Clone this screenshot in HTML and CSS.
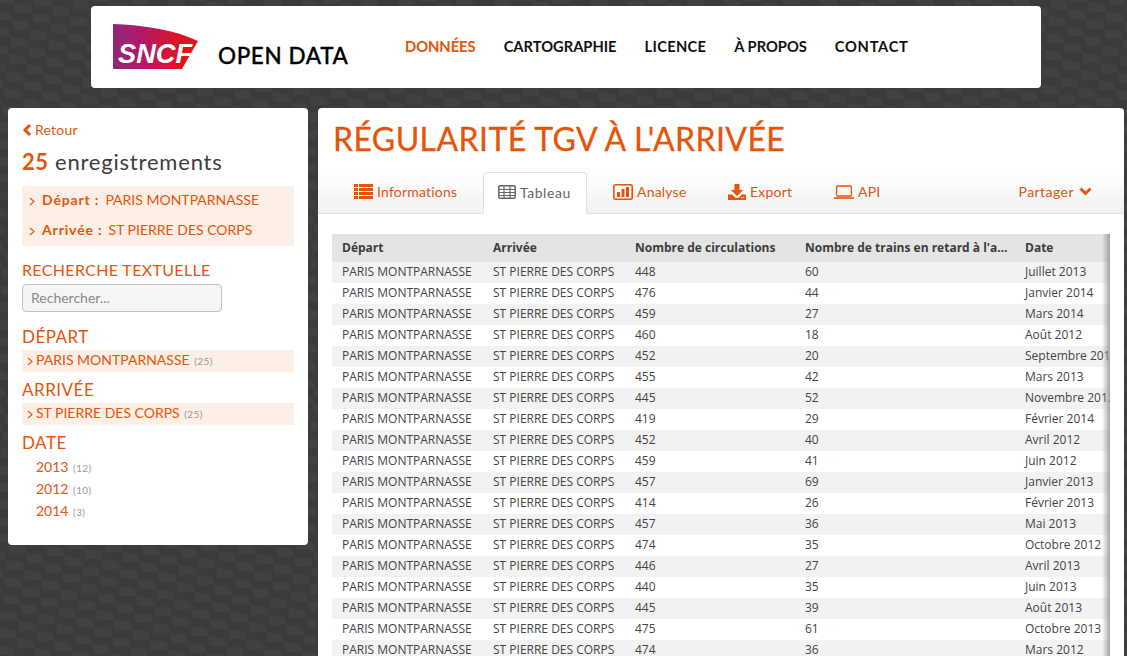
FILE: index.html
```html
<!DOCTYPE html>
<html lang="fr">
<head>
<meta charset="utf-8">
<title>Régularité TGV à l'arrivée</title>
<link rel="stylesheet" href="styles.css">
</head>
<body>
<header class="topbar">
  <svg class="logo" width="85" height="45" viewBox="0 0 85 45">
    <defs><linearGradient id="lg"><stop offset="0" stop-color="#8c2a78"/><stop offset=".3" stop-color="#b01870"/><stop offset=".8" stop-color="#e0141e"/><stop offset="1" stop-color="#e3121a"/></linearGradient></defs>
    <path d="M0 0C30 1 62 6 85 17L69 45H1Q0 45 0 44Z" fill="url(#lg)"/>
    <text x="5" y="39" class="logo-text" textLength="74" lengthAdjust="spacingAndGlyphs">SNCF</text>
  </svg>
  <div class="brand">OPEN DATA</div>
  <nav class="nav">
    <a class="active">DONNÉES</a><a>CARTOGRAPHIE</a><a>LICENCE</a><a>À PROPOS</a><a>CONTACT</a>
  </nav>
</header>
<div class="columns">
  <aside class="side">
    <a class="back"><svg width="10" height="12" viewBox="0 0 10 12"><path d="M8 1 3 6l5 5" fill="none" stroke="#e6540a" stroke-width="3"/></svg>Retour</a>
    <div class="count"><b>25</b> enregistrements</div>
    <div class="refine">
      <div class="ref"><svg class="gt" width="6" height="9" viewBox="0 0 6 9"><path d="M1 1l4 3.5L1 8" fill="none" stroke="#e6540a" stroke-width="1.1"/></svg><b>Départ :</b> PARIS MONTPARNASSE</div>
      <div class="ref"><svg class="gt" width="6" height="9" viewBox="0 0 6 9"><path d="M1 1l4 3.5L1 8" fill="none" stroke="#e6540a" stroke-width="1.1"/></svg><b>Arrivée :</b> ST PIERRE DES CORPS</div>
    </div>
    <h3 class="search-title">RECHERCHE TEXTUELLE</h3>
    <input class="search" placeholder="Rechercher...">
    <h3 class="facet-title">DÉPART</h3>
    <div class="facet on"><svg class="gt2" width="6" height="9" viewBox="0 0 6 9"><path d="M1 1l4 3.5L1 8" fill="none" stroke="#e6540a" stroke-width="1.1"/></svg>PARIS MONTPARNASSE <small>(25)</small></div>
    <h3 class="facet-title">ARRIVÉE</h3>
    <div class="facet on"><svg class="gt2" width="6" height="9" viewBox="0 0 6 9"><path d="M1 1l4 3.5L1 8" fill="none" stroke="#e6540a" stroke-width="1.1"/></svg>ST PIERRE DES CORPS <small>(25)</small></div>
    <h3 class="facet-title date-title">DATE</h3>
    <div class="facet">2013 <small>(12)</small></div>
    <div class="facet">2012 <small>(10)</small></div>
    <div class="facet">2014 <small>(3)</small></div>
  </aside>
  <main class="main">
    <h1 class="title">RÉGULARITÉ TGV À L'ARRIVÉE</h1>
    <div class="tabs">
      <a class="tab tab-info"><svg width="19" height="15" viewBox="0 0 19 15" fill="#e6540a"><path d="M0 0h4v3H0zM5 0h14v3H5zM0 4h4v3H0zM5 4h14v3H5zM0 8h4v3H0zM5 8h14v3H5zM0 12h4v3H0zM5 12h14v3H5z"/></svg>Informations</a>
      <a class="tab active"><svg width="18" height="14" viewBox="0 0 18 14" fill="none" stroke="#666" stroke-width="1.2"><rect x=".8" y=".8" width="16.4" height="12.4" rx="1.2" stroke-width="1.5"/><path d="M.8 4.500h16.400M.8 7.500h16.400M.8 10.500h16.400M6 .8v12.400M12 .8v12.400"/></svg>Tableau</a>
      <a class="tab tab-ana"><svg width="20" height="16" viewBox="0 0 20 16"><rect x=".8" y=".8" width="18.4" height="14.4" rx="1.5" fill="none" stroke="#e6540a" stroke-width="1.6"/><path d="M4 8h3v5H4zM8.500 5h3v8h-3zM13 3h3v10h-3z" fill="#e6540a"/></svg>Analyse</a>
      <a class="tab tab-exp"><svg width="18" height="16" viewBox="0 0 18 16" fill="#e6540a"><path d="M6.500 0h5v6h3.500L9 12 3 6h3.500z"/><path d="M0 10.500h4l2.500 2.500q2.500 2 5 0L14 10.500h4V16H0z"/><rect x="13" y="13" width="1.200" height="1.200" fill="#fff"/><rect x="15" y="13" width="1.200" height="1.200" fill="#fff"/></svg>Export</a>
      <a class="tab tab-api"><svg width="20" height="14" viewBox="0 0 20 14" fill="none" stroke="#e6540a"><rect x="2.600" y="1" width="14.800" height="10" rx="1" stroke-width="1.300"/><path d="M0 13h20" stroke-width="1.600"/></svg>API</a>
      <a class="tab share">Partager <svg width="13" height="9" viewBox="0 0 13 9"><path d="M1.500 1.500 6.500 6.500l5-5" fill="none" stroke="#e6540a" stroke-width="2.800"/></svg></a>
    </div>
    <div class="table-wrap">
      <table class="data">
        <colgroup><col class="c1"><col class="c2"><col class="c3"><col class="c4"><col class="c5"></colgroup>
        <thead><tr><th>Départ</th><th>Arrivée</th><th>Nombre de circulations</th><th>Nombre de trains en retard à l'arrivée</th><th>Date</th></tr></thead>
        <tbody>
          <tr><td>PARIS MONTPARNASSE</td><td>ST PIERRE DES CORPS</td><td>448</td><td>60</td><td>Juillet 2013</td></tr>
          <tr><td>PARIS MONTPARNASSE</td><td>ST PIERRE DES CORPS</td><td>476</td><td>44</td><td>Janvier 2014</td></tr>
          <tr><td>PARIS MONTPARNASSE</td><td>ST PIERRE DES CORPS</td><td>459</td><td>27</td><td>Mars 2014</td></tr>
          <tr><td>PARIS MONTPARNASSE</td><td>ST PIERRE DES CORPS</td><td>460</td><td>18</td><td>Août 2012</td></tr>
          <tr><td>PARIS MONTPARNASSE</td><td>ST PIERRE DES CORPS</td><td>452</td><td>20</td><td>Septembre 2012</td></tr>
          <tr><td>PARIS MONTPARNASSE</td><td>ST PIERRE DES CORPS</td><td>455</td><td>42</td><td>Mars 2013</td></tr>
          <tr><td>PARIS MONTPARNASSE</td><td>ST PIERRE DES CORPS</td><td>445</td><td>52</td><td>Novembre 2012</td></tr>
          <tr><td>PARIS MONTPARNASSE</td><td>ST PIERRE DES CORPS</td><td>419</td><td>29</td><td>Février 2014</td></tr>
          <tr><td>PARIS MONTPARNASSE</td><td>ST PIERRE DES CORPS</td><td>452</td><td>40</td><td>Avril 2012</td></tr>
          <tr><td>PARIS MONTPARNASSE</td><td>ST PIERRE DES CORPS</td><td>459</td><td>41</td><td>Juin 2012</td></tr>
          <tr><td>PARIS MONTPARNASSE</td><td>ST PIERRE DES CORPS</td><td>457</td><td>69</td><td>Janvier 2013</td></tr>
          <tr><td>PARIS MONTPARNASSE</td><td>ST PIERRE DES CORPS</td><td>414</td><td>26</td><td>Février 2013</td></tr>
          <tr><td>PARIS MONTPARNASSE</td><td>ST PIERRE DES CORPS</td><td>457</td><td>36</td><td>Mai 2013</td></tr>
          <tr><td>PARIS MONTPARNASSE</td><td>ST PIERRE DES CORPS</td><td>474</td><td>35</td><td>Octobre 2012</td></tr>
          <tr><td>PARIS MONTPARNASSE</td><td>ST PIERRE DES CORPS</td><td>446</td><td>27</td><td>Avril 2013</td></tr>
          <tr><td>PARIS MONTPARNASSE</td><td>ST PIERRE DES CORPS</td><td>440</td><td>35</td><td>Juin 2013</td></tr>
          <tr><td>PARIS MONTPARNASSE</td><td>ST PIERRE DES CORPS</td><td>445</td><td>39</td><td>Août 2013</td></tr>
          <tr><td>PARIS MONTPARNASSE</td><td>ST PIERRE DES CORPS</td><td>475</td><td>61</td><td>Octobre 2013</td></tr>
          <tr><td>PARIS MONTPARNASSE</td><td>ST PIERRE DES CORPS</td><td>474</td><td>36</td><td>Mars 2012</td></tr>
        </tbody>
      </table>
      <div class="edge"></div>
    </div>
  </main>
</div>
</body>
</html>
```
FILE: styles.css
```css
* { box-sizing: border-box; }
html, body { height: 656px; overflow: hidden; }
body {
  margin: 0;
  padding: 6px 3px 0 8px;
  font-family: Lato, "Liberation Sans", sans-serif;
  color: #e6540a;
  background-color: #3b3b3b;
  background-image: url("data:image/svg+xml,%3Csvg xmlns='http://www.w3.org/2000/svg' width='1127' height='656'%3E%3Cdefs%3E%3Cpattern id='p' width='20' height='20' patternUnits='userSpaceOnUse' patternTransform='matrix(.9 .5 1 -.35 3 7)'%3E%3Cpath d='M0.600 11 Q5 16 9.600 18.800 L19.500 11.300 L12.600 1 Z' fill='%23414141'/%3E%3C/pattern%3E%3C/defs%3E%3Crect width='1127' height='656' fill='url(%23p)'/%3E%3C/svg%3E");
  background-repeat: no-repeat;
}
a { color: inherit; }

.topbar {
  width: 950px;
  height: 82px;
  margin: 0 0 20px 83px;
  padding: 18px 0 0 22px;
  background: #fff;
  border-radius: 4px;
  display: flex;
  align-items: flex-start;
}
.logo { flex: none; }
.logo-text { font: italic 700 28px "Liberation Sans", sans-serif; fill: #fff; }
.brand { margin: 18px 0 0 20px; width: 187px; font-size: 22.500px; line-height: 27px; font-weight: 500; color: #000; letter-spacing: .6px; -webkit-text-stroke: .3px #000; white-space: nowrap; }
.nav { display: flex; gap: 28px; margin-top: 13px; font-size: 14.700px; line-height: 18px; font-weight: 700; color: #111; }
.nav .active { color: #e6540a; }
.nav a:nth-child(3) { letter-spacing: .3px; }
.nav a:nth-child(5) { letter-spacing: .7px; }

.columns { display: flex; gap: 10px; align-items: flex-start; }

.side {
  flex: none;
  width: 300px;
  height: 437px;
  padding: 13px 14px 0;
  background: #fff;
  border-radius: 4px;
}
.back { display: flex; align-items: center; gap: 3px; font-size: 14px; line-height: 17px; letter-spacing: .2px; }
.count { margin-top: 9px; font-size: 22px; line-height: 30px; color: #3c3c3c; letter-spacing: .8px; }
.count b { color: #e6540a; font-weight: 700; letter-spacing: .5px; }
.refine { margin-top: 9px; height: 60px; background: #fdeee6; padding: 0 7px; }
.ref { height: 30px; line-height: 28px; font-size: 14px; white-space: nowrap; }
.ref b { margin-right: 2.500px; letter-spacing: .85px; }
.gt { margin-right: 7px; vertical-align: -1px; }
h3 { margin: 0; font-weight: 400; font-size: 17px; letter-spacing: .5px; }
.search-title { margin-top: 14px; height: 20px; line-height: 20px; font-size: 16px; letter-spacing: .35px; }
.search {
  display: block;
  width: 200px;
  height: 28px;
  margin-top: 4px;
  padding: 0 8px 2px;
  background: #f5f5f5;
  border: 1px solid #c4c4c4;
  border-radius: 4px;
  font: 14px Lato, sans-serif;
}
.search::placeholder { color: #8a8a8a; opacity: 1; }
.facet-title { margin-top: 14px; line-height: 22px; height: 24px; }
.date-title { height: 25px; margin-top: 8px; }
.facet { height: 22px; line-height: 20px; padding-left: 14px; font-size: 14px; white-space: nowrap; }
.facet.on { background: #fdeee6; padding-left: 5px; }
.facet-title + .facet.on + .facet-title { margin-top: 7px; }
.facet small { margin-left: 1px; font-size: 10px; color: #999; letter-spacing: .4px; }
.gt2 { margin-right: 3px; vertical-align: -1px; }

.main {
  flex: none;
  width: 806px;
  height: 560px;
  background: #fff;
  border-radius: 4px;
}
.title { margin: 0; padding: 13px 0 0 15px; height: 64px; font-size: 32px; line-height: 36px; font-weight: 400; letter-spacing: .42px; -webkit-text-stroke: .3px #e6540a; }
.tabs {
  height: 42px;
  display: flex;
  align-items: stretch;
  padding-left: 22px;
  background: linear-gradient(#ffffff, #f1f1f1);
  border-bottom: 1px solid #e2e2e2;
  font-size: 14px;
  letter-spacing: .2px;
}
.tab { display: flex; align-items: center; gap: 4px; height: 39px; padding: 0 14px; white-space: nowrap; }
.tab-info { width: 143px; }
.tab.active {
  width: 104px;
  height: 42px;
  padding: 0 0 3px 14px;
  gap: 4px;
  letter-spacing: .55px;
  color: #666;
  background: #fff;
  border: 1px solid #e2e2e2;
  border-bottom: 0;
  border-radius: 4px 4px 0 0;
}
.tab-ana { margin-left: 12px; width: 115px; padding: 0 0 0 14px; }
.tab-exp { margin-left: 14px; width: 106px; padding: 0; }
.tab-api { padding: 0; }
.share { margin-left: auto; padding: 0 32px 0 0; gap: 5px; letter-spacing: .45px; }

.table-wrap { position: relative; width: 778px; margin: 20px 0 0 14px; overflow: hidden; }
.data { width: 778px; table-layout: fixed; border-collapse: collapse; font-family: "Open Sans", sans-serif; font-size: 12px; color: #444; }
.c1 { width: 151px; } .c2 { width: 142px; } .c3 { width: 170px; } .c4 { width: 220px; } .c5 { width: 95px; }
.data th { height: 28px; padding: 0 6px 2px 10px; background: #e4e4e4; text-align: left; font-weight: 700; color: #3c3c3c; white-space: nowrap; overflow: hidden; text-overflow: ellipsis; }
.data td { height: 21px; padding: 0 0 1px 10px; white-space: nowrap; overflow: hidden; line-height: 20px; }
.data tbody tr:nth-child(odd) td { background: #f2f2f2; }
.edge { position: absolute; top: 0; right: 0; bottom: 0; width: 8px; background: linear-gradient(90deg, rgba(150,150,150,0), rgba(150,150,150,.85)); }
```
